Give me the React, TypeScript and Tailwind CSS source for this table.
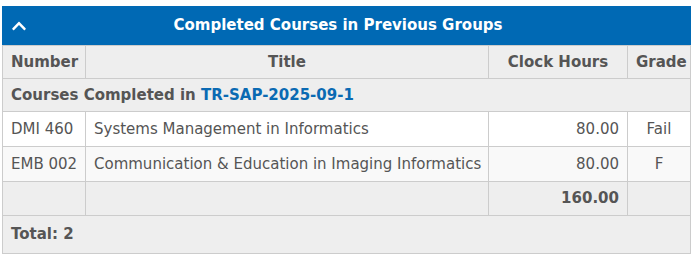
import React from "react";
import { FaChevronUp } from "react-icons/fa";

const rows = [
  { number: "DMI 460", title: "Systems Management in Informatics", hours: "80.00", grade: "Fail" },
  { number: "EMB 002", title: "Communication & Education in Imaging Informatics", hours: "80.00", grade: "F" },
];

const cell = "border border-[#cccccc] px-[8px] whitespace-nowrap";

export default function App() {
  return (
    <div className="bg-white pl-[2px] pt-[6px] w-[697px] h-[259px]" style={{ fontFamily: '"DejaVu Sans", Verdana, sans-serif' }}>
      <div className="w-[689px]">
        <div className="flex items-center h-[39px] bg-[#0069b4] text-white">
          <FaChevronUp className="ml-[9px] w-[16px] h-[16px]" />
          <div className="flex-1 text-center text-[15px] font-bold pr-[42px]">Completed Courses in Previous Groups</div>
        </div>
        <table className="w-full table-fixed border-collapse text-[15px] text-[#555555]">
          <colgroup>
            <col className="w-[83px]" />
            <col className="w-[403px]" />
            <col className="w-[139px]" />
            <col />
          </colgroup>
          <thead>
            <tr className="bg-[#eeeeee] h-[33px] font-bold">
              <th className={`${cell} text-center`}>Number</th>
              <th className={`${cell} text-center`}>Title</th>
              <th className={`${cell} text-center`}>Clock Hours</th>
              <th className={`${cell} text-center`}>Grade</th>
            </tr>
          </thead>
          <tbody>
            <tr className="bg-[#eeeeee] h-[33px]">
              <td colSpan={4} className={`${cell} font-bold`}>
                Courses Completed in <span className="text-[#0a6ab3]">TR-SAP-2025-09-1</span>
              </td>
            </tr>
            {rows.map((r, i) => (
              <tr key={r.number} className={`${i % 2 === 0 ? "bg-white" : "bg-[#f9f9f9]"} h-[35px]`}>
                <td className={cell}>{r.number}</td>
                <td className={`${cell} overflow-visible`}>{r.title}</td>
                <td className={`${cell} text-right`}>{r.hours}</td>
                <td className={`${cell} text-center`}>{r.grade}</td>
              </tr>
            ))}
            <tr className="bg-[#eeeeee] h-[34px]">
              <td className={cell}></td>
              <td className={cell}></td>
              <td className={`${cell} text-right font-bold`}>160.00</td>
              <td className={cell}></td>
            </tr>
            <tr className="bg-[#eeeeee] h-[38px]">
              <td colSpan={4} className={`${cell} font-bold`}>Total: 2</td>
            </tr>
          </tbody>
        </table>
      </div>
    </div>
  );
}
